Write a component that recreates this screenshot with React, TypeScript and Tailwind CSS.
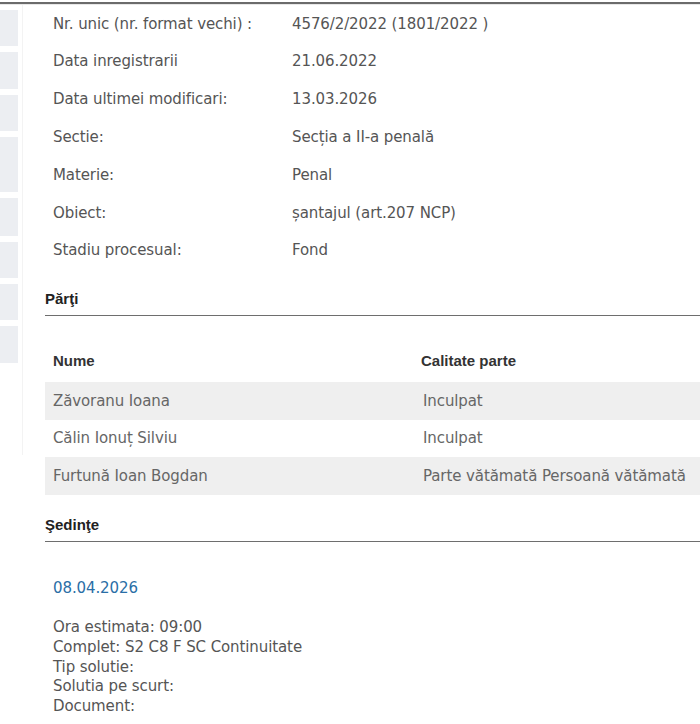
const info = [
  ["Nr. unic (nr. format vechi) :", "4576/2/2022 (1801/2022 )"],
  ["Data inregistrarii", "21.06.2022"],
  ["Data ultimei modificari:", "13.03.2026"],
  ["Sectie:", "Secția a II-a penală"],
  ["Materie:", "Penal"],
  ["Obiect:", "șantajul (art.207 NCP)"],
  ["Stadiu procesual:", "Fond"],
];

const parti = [
  ["Zăvoranu Ioana", "Inculpat"],
  ["Călin Ionuț Silviu", "Inculpat"],
  ["Furtună Ioan Bogdan", "Parte vătămată Persoană vătămată"],
];

// heights of the side menu tabs, gap 6px between
const tabs = [36, 37, 36, 55, 38, 36, 36, 37];

export default function App() {
  return (
    <div className="w-[700px] h-[724px] overflow-hidden bg-white relative font-['DejaVu_Sans',sans-serif] text-[#555]">
      <div className="h-[2px] bg-white" />
      <div className="h-[2px] bg-[#6b6b6b]" />
      <div className="h-px bg-[#e8e8e8]" />
      <div className="flex">
        {/* side tabs */}
        <div className="w-[23px] shrink-0 flex flex-col gap-[6px] pt-[5px] border-r border-[#f3f3f3] h-[450px]">
          {tabs.map((h, i) => (
            <div key={i} className="w-[18px] bg-[#eceef2]" style={{ height: h }} />
          ))}
        </div>

        <div className="flex-1 pl-[22px]">
          {/* case details */}
          <div className="flex flex-col">
            {info.map(([k, v]) => (
              <div key={k} className="flex h-[37.8px] items-center text-[15px] tracking-[-0.1px]">
                <div className="w-[247px] pl-[8px]">{k}</div>
                <div>{v}</div>
              </div>
            ))}
          </div>

          {/* Parti */}
          <div className="mt-[18px] border-b-[1.5px] border-[#6e6e6e] pb-[5px] font-['Liberation_Sans',sans-serif] font-bold text-[15px] text-[#222]">
            Părţi
          </div>
          <div className="mt-[28px]">
            <div className="flex h-[38px] pb-[4px] items-center font-['Liberation_Sans',sans-serif] font-bold text-[15px] text-[#333]">
              <div className="w-[376px] pl-[8px]">Nume</div>
              <div>Calitate parte</div>
            </div>
            {parti.map(([n, c], i) => (
              <div
                key={n}
                className={`flex h-[37.5px] items-center text-[15px] tracking-[-0.1px] text-[#666] ${i % 2 === 0 ? "bg-[#efefef]" : "bg-white"}`}
              >
                <div className="w-[378px] pl-[8px]">{n}</div>
                <div>{c}</div>
              </div>
            ))}
          </div>

          {/* Sedinte */}
          <div className="mt-[19px] border-b-[1.5px] border-[#6e6e6e] pb-[5px] font-['Liberation_Sans',sans-serif] font-bold text-[15px] text-[#222]">
            Şedinţe
          </div>
          <div className="pl-[8px] pt-[35px] text-[15px] tracking-[-0.1px]">
            <div className="text-[#2a6ea6] leading-[22px]">08.04.2026</div>
            <div className="mt-[19px] leading-[19.8px]">
              <div>Ora estimata: 09:00</div>
              <div>Complet: S2 C8 F SC Continuitate</div>
              <div>Tip solutie:</div>
              <div>Solutia pe scurt:</div>
              <div>Document:</div>
            </div>
          </div>
        </div>
      </div>
    </div>
  );
}
